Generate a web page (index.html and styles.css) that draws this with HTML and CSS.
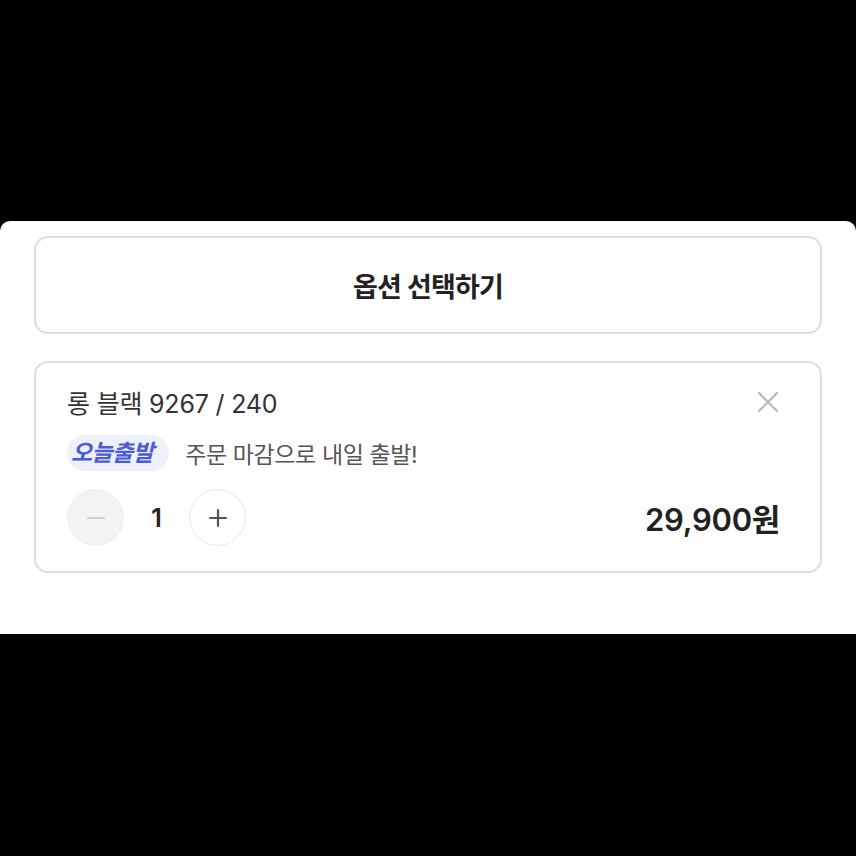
FILE: index.html
```html
<!DOCTYPE html>
<html>
<head>
  <title>옵션 선택</title>
  <link rel="stylesheet" href="styles.css">
</head>
<body>
  <div class="sheet">
    <button class="select-btn">옵션 선택하기</button>

    <div class="option-card">
      <div class="option-head">
        <span class="option-name">롱 블랙 9267 / 240</span>
        <button class="close-btn" aria-label="삭제">
          <svg width="24" height="24" viewBox="0 0 24 24"><path d="M3 3L21 21M21 3L3 21" stroke="#b8b8b8" stroke-width="2.2" stroke-linecap="round" fill="none"/></svg>
        </button>
      </div>
      <div class="ship-row">
        <span class="badge">오늘출발</span>
        <span class="ship-text">주문 마감으로 내일 출발!</span>
      </div>
      <div class="qty-row">
        <div class="stepper">
          <button class="step minus">
            <svg width="22" height="22" viewBox="0 0 22 22"><path d="M3 11H19" stroke="#cfcfcf" stroke-width="2.2" stroke-linecap="round"/></svg>
          </button>
          <span class="qty">1</span>
          <button class="step plus">
            <svg width="22" height="22" viewBox="0 0 22 22"><path d="M3 11H19M11 3V19" stroke="#555" stroke-width="2.2" stroke-linecap="round"/></svg>
          </button>
        </div>
        <span class="price">29,900원</span>
      </div>
    </div>
  </div>
</body>
</html>
```

FILE: styles.css
```css
body { margin: 0; background: #000; font-family: Inter, "Noto Sans CJK KR", sans-serif; color: #222; }
.sheet { margin-top: 221px; height: 413px; box-sizing: border-box; background: #fff; padding: 15px 34px 0; border-radius: 10px 10px 0 0; }
button { font-family: inherit; cursor: pointer; }
.select-btn { display: block; width: 100%; height: 98px; background: #fff; border: 2px solid #dedede; border-radius: 14px; font-size: 27px; font-weight: 600; color: #222; letter-spacing: -0.8px; }
.option-card { margin-top: 27px; height: 212px; box-sizing: border-box; border: 2px solid #dedede; border-radius: 14px; padding: 20px 40px 0 31px; }
.option-head { display: flex; justify-content: space-between; align-items: center; height: 38px; }
.option-name { font-size: 25px; color: #333; letter-spacing: -0.2px; }
.close-btn { background: none; border: 0; padding: 0; display: flex; }
.ship-row { display: flex; align-items: center; gap: 16px; margin-top: 14px; }
.badge { background: #eef0fb; color: #4b5bd8; font-weight: 700; font-style: italic; font-size: 23px; padding: 0 16px 0 4px; height: 36px; line-height: 36px; border-radius: 18px; letter-spacing: -0.6px; }
.ship-text { font-size: 23px; color: #555; letter-spacing: -0.4px; }
.qty-row { display: flex; justify-content: space-between; align-items: center; margin-top: 18px; }
.stepper { display: flex; align-items: center; }
.step { width: 57px; height: 57px; border-radius: 50%; display: flex; align-items: center; justify-content: center; padding: 0; }
.minus { background: #f3f3f3; border: 1px solid #efefef; }
.plus { background: #fff; border: 1px solid #e8e8e8; }
.qty { width: 65px; text-align: center; font-size: 25px; font-weight: 600; color: #222; }
.price { font-size: 31px; font-weight: 600; color: #222; letter-spacing: -0.3px; }
```
